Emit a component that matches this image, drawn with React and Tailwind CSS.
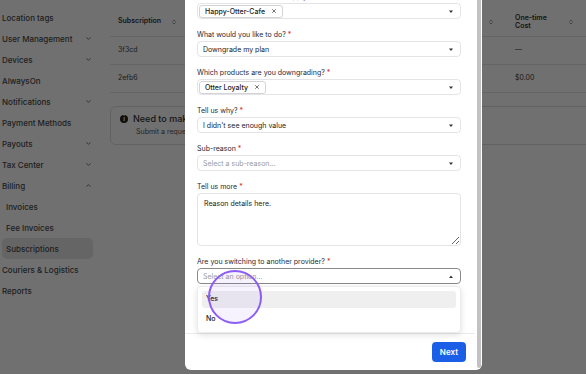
import React from "react";
import { ChevronDown, ChevronUp, ChevronsUpDown, X } from "lucide-react";

function NavItem({ label, chevron, sub, active }) {
  return (
    <div
      className={
        "flex h-[21px] items-center justify-between text-[8px] font-medium text-[#4a4a4a] " +
        (sub ? "ml-[2px] w-[91px] pl-[4px] rounded-[5px] " : "pl-[2px] pr-[8px] ") +
        (active ? "bg-[#e6e6e6]" : "")
      }
    >
      <span>{label}</span>
      {chevron === "down" && <ChevronDown size={7} strokeWidth={2.5} />}
      {chevron === "up" && <ChevronUp size={7} strokeWidth={2.5} />}
    </div>
  );
}

function Caret({ up }) {
  return (
    <svg width="4" height="3" viewBox="0 0 4 3" className="shrink-0">
      {up ? (
        <path d="M0 3 L2 0.5 L4 3 Z" fill="#333" />
      ) : (
        <path d="M0 0.5 L4 0.5 L2 3 Z" fill="#333" />
      )}
    </svg>
  );
}

function Label({ children }) {
  return (
    <div className="mb-[2px] h-[9px] text-[7px] leading-[9px] text-[#1f2937]">
      {children}
      <span className="ml-[2px] text-[#dc2626]">*</span>
    </div>
  );
}

function Select({ value, placeholder, up, focused }) {
  return (
    <div
      className={
        "flex h-[16px] items-center justify-between rounded-[4px] border bg-white pl-[5px] pr-[7px] text-[7px] leading-[9px] " +
        (focused ? "border-[#8a8a8a]" : "border-[#e4e4e7]")
      }
    >
      {value ? (
        <span className="text-[#222]">{value}</span>
      ) : (
        <span className="text-[#9a9a9a]">{placeholder}</span>
      )}
      <Caret up={up} />
    </div>
  );
}

function ChipSelect({ chip }) {
  return (
    <div className="flex h-[16px] items-center justify-between rounded-[4px] border border-[#e4e4e7] bg-white pl-[1px] pr-[7px]">
      <span className="flex h-[13px] items-center gap-[6px] rounded-[3px] border border-[#d4d4d8] px-[5px] text-[7px] leading-[9px] font-medium text-[#222]">
        {chip}
        <X size={6} strokeWidth={2.5} />
      </span>
      <Caret />
    </div>
  );
}

function Field({ label, children, first }) {
  return (
    <div className={"flex flex-col " + (first ? "" : "mt-[11px]")}>
      <Label>{label}</Label>
      {children}
    </div>
  );
}

export default function App() {
  return (
    <div className="relative h-[374px] w-[586px] overflow-hidden bg-white font-['Inter',sans-serif]">
      {/* underlying page */}
      <div className="flex h-full">
        <div className="flex w-[100px] shrink-0 flex-col pt-[7px]">
          <NavItem label="Location tags" />
          <NavItem label="User Management" chevron="down" />
          <NavItem label="Devices" chevron="down" />
          <NavItem label="AlwaysOn" />
          <NavItem label="Notifications" chevron="down" />
          <NavItem label="Payment Methods" />
          <NavItem label="Payouts" chevron="down" />
          <NavItem label="Tax Center" chevron="down" />
          <NavItem label="Billing" chevron="up" />
          <NavItem label="Invoices" sub />
          <NavItem label="Fee Invoices" sub />
          <NavItem label="Subscriptions" sub active />
          <NavItem label="Couriers & Logistics" />
          <NavItem label="Reports" />
        </div>
        <div className="flex flex-1 flex-col pl-[10px] pt-[7px]">
          <div className="flex h-[30px] w-[600px] items-center border-b border-[#e5e5e5] text-[7px] font-semibold text-[#333]">
            <div className="flex w-[80px] items-center gap-[10px] pl-[8px]">
              Subscription
              <ChevronsUpDown size={6} strokeWidth={2} />
            </div>
            <div className="flex w-[317px] justify-end pr-[13px]">
              <ChevronsUpDown size={6} strokeWidth={2} />
            </div>
            <div className="flex w-[79px] items-center justify-between pl-[8px] pr-[12px] leading-[8px]">
              <span>
                One-time
                <br />
                Cost
              </span>
              <ChevronsUpDown size={6} strokeWidth={2} />
            </div>
          </div>
          <div className="flex h-[28px] w-[600px] items-center border-b border-[#e5e5e5] text-[7px] text-[#444]">
            <div className="w-[397px] pl-[8px]">3f3cd</div>
            <div className="pl-[8px]">—</div>
          </div>
          <div className="flex h-[28px] w-[600px] items-center border-b border-[#e5e5e5] text-[7px] text-[#444]">
            <div className="w-[397px] pl-[8px]">2efb6</div>
            <div className="pl-[8px]">$0.00</div>
          </div>
          <div className="mt-[13px] w-[600px] rounded-[6px] border border-[#e0e0e0] pb-[8px] pl-[9px] pt-[6px]">
            <div className="flex h-[11px] items-center gap-[5px] text-[9px] font-medium text-[#333]">
              <span className="flex h-[8px] w-[8px] items-center justify-center rounded-full bg-[#222] text-[6px] font-bold text-white">
                i
              </span>
              Need to make a change to your subscription?
            </div>
            <div className="mt-[3px] h-[9px] pl-[16px] text-[7px] leading-[9px] text-[#555]">
              Submit a request and our team will get back to you.
            </div>
          </div>
        </div>
      </div>

      {/* overlay */}
      <div className="absolute inset-0 bg-black/[0.56]" />

      {/* modal */}
      <div className="absolute bottom-[4px] left-[185px] flex w-[297px] overflow-hidden rounded-[6px] bg-white">
        <div className="flex w-[290px] flex-col">
          <div className="flex flex-col pb-[49px] pl-[12px] pr-[14px] pt-[12px]">
            <Field label="Which location(s) does this apply to?" first>
              <ChipSelect chip="Happy-Otter-Cafe" />
            </Field>
            <Field label="What would you like to do?">
              <Select value="Downgrade my plan" />
            </Field>
            <Field label="Which products are you downgrading?">
              <ChipSelect chip="Otter Loyalty" />
            </Field>
            <Field label="Tell us why?">
              <Select value="I didn't see enough value" />
            </Field>
            <Field label="Sub-reason">
              <Select placeholder="Select a sub-reason..." />
            </Field>
            <Field label="Tell us more">
              <textarea
                readOnly
                defaultValue="Reason details here."
                className="h-[53px] rounded-[4px] border border-[#e4e4e7] px-[6px] pt-[5px] text-[7px] text-[#222] outline-none"
              />
            </Field>
            <div className="relative">
              <Field label="Are you switching to another provider?">
                <Select placeholder="Select an option..." up focused />
              </Field>
              <div className="absolute left-0 right-0 top-[40px] z-10 flex flex-col gap-[3px] rounded-[4px] border border-[#ececec] bg-white p-[4px] shadow-[0_2px_6px_rgba(0,0,0,0.12)]">
                <div className="flex h-[17px] items-center rounded-[3px] bg-[#efefef] pl-[4px] text-[7px] font-medium text-[#222]">
                  Yes
                </div>
                <div className="flex h-[17px] items-center pl-[4px] text-[7px] font-medium text-[#222]">
                  No
                </div>
              </div>
            </div>
          </div>
          <div className="flex justify-end border-t border-[#ebebeb] pb-[8px] pr-[9px] pt-[8px]">
            <button className="h-[20px] rounded-[4px] bg-[#1a5fe6] px-[8px] text-[8px] font-semibold text-white">
              Next
            </button>
          </div>
        </div>
        <div className="flex w-[7px] justify-center pb-[2px]">
          <div className="w-[4px] rounded-full bg-[#c2c2c2]" />
        </div>
      </div>

      {/* click indicator */}
      <div className="absolute left-[208px] top-[270px] z-20 h-[54px] w-[54px] rounded-full border-2 border-[#8b5cf6] bg-[#8b5cf6]/[0.08]" />
    </div>
  );
}
